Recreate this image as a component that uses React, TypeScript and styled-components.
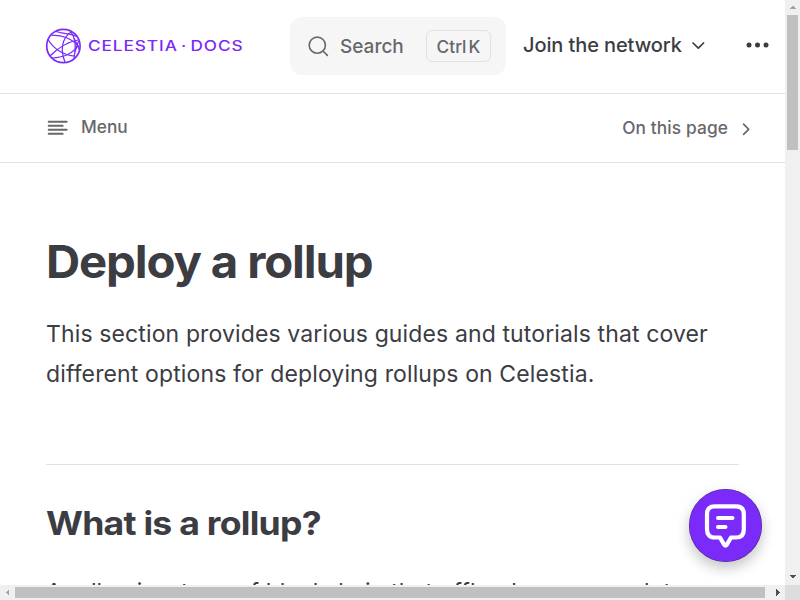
import React from 'react';
import styled, { createGlobalStyle } from 'styled-components';

const GlobalStyle = createGlobalStyle`
  * { box-sizing: border-box; }
  body { margin: 0; overflow: hidden; background: #fff; color: #3c3c43;
    font-family: Inter, "Liberation Sans", sans-serif; }
  button { font: inherit; color: inherit; border: 0; background: none; padding: 0; }
  svg { display: block; flex-shrink: 0; }
`;

const Frame = styled.div`
  display: grid;
  grid-template: 585px 15px / 785px 15px;
  width: 800px;
  height: 600px;
  position: relative;
  overflow: hidden;
`;
const Page = styled.div`
  overflow: hidden;
`;
const NavBar = styled.header`
  display: flex;
  align-items: center;
  height: 94px;
  padding-left: 45px;
  padding-bottom: 2px;
  border-bottom: 1px solid #e2e2e3;
`;
const Logo = styled.a`
  display: flex;
  align-items: center;
  width: 245px;
  gap: 6px;
  color: #7b2bf9;
`;
const Stretch = styled.span<{ $x: number }>`
  display: inline-block;
  white-space: nowrap;
  transform: scaleX(${p => p.$x});
  transform-origin: left center;
`;
const LogoText = styled.span`
  font-size: 14px;
  line-height: 20px;
  font-weight: 500;
  letter-spacing: 0.75px;
  word-spacing: -1.8px;
  padding-top: 1px;
`;
const SearchButton = styled.button`
  display: flex;
  align-items: center;
  width: 216px;
  height: 58px;
  padding: 0 15px 0 17px;
  border-radius: 12px;
  background: #f6f6f7;
  color: #67676c;
  font-size: 19px;
  font-weight: 500;
`;
const SearchLabel = styled.span`
  margin-left: 10px;
  padding-top: 1px;
`;
const Keys = styled.span`
  display: flex;
  align-items: center;
  justify-content: center;
  gap: 2px;
  width: 65px;
  height: 32px;
  margin-left: auto;
  padding-top: 1px;
  border: 1px solid #e2e2e3;
  border-radius: 6px;
  font-size: 17.3px;
`;
const NavMenu = styled.button`
  display: flex;
  align-items: center;
  gap: 8px;
  margin-left: 17px;
  padding-bottom: 1px;
  font-size: 20px;
  font-weight: 500;
  letter-spacing: -0.1px;
  white-space: nowrap;
`;
const MoreButton = styled.button`
  margin-left: 38px;
  padding-bottom: 1px;
`;
const LocalNav = styled.nav`
  display: flex;
  align-items: center;
  justify-content: space-between;
  height: 69px;
  padding: 0 32px 3px 46px;
  border-bottom: 1px solid #e2e2e3;
  color: #67676c;
  font-size: 17.3px;
  font-weight: 500;
`;
const LocalButton = styled.button<{ $gap: number; $drop?: number; $spacing?: number }>`
  display: flex;
  align-items: center;
  gap: ${p => p.$gap}px;
  padding-top: ${p => p.$drop ?? 0}px;
  letter-spacing: ${p => p.$spacing ?? 0}px;
`;
const Article = styled.main`
  padding: 70px 46px 0;
`;
const Title = styled.h1`
  margin: 0;
  font-size: 45px;
  line-height: 58px;
  font-weight: 700;
  letter-spacing: -1.1px;
`;
const Paragraph = styled.p<{ $top?: number }>`
  margin: ${p => p.$top ?? 23}px 0 0;
  font-size: 23px;
  line-height: 40px;
  font-weight: 400;
  letter-spacing: 0.125px;
  white-space: nowrap;
`;
const Section = styled.section`
  margin-top: 70px;
  padding-top: 35px;
  border-top: 1px solid #e2e2e3;
`;
const Heading = styled.h2`
  margin: 0;
  font-size: 33px;
  line-height: 46px;
  font-weight: 700;
  letter-spacing: -0.7px;
`;
const ScrollTrack = styled.div<{ $vertical?: boolean }>`
  display: flex;
  flex-direction: ${p => (p.$vertical ? 'column' : 'row')};
  justify-content: space-between;
  background: #f0f0f0;
`;
const Thumb = styled.div<{ $vertical?: boolean }>`
  flex: none;
  width: ${p => (p.$vertical ? '11px' : '750px')};
  height: ${p => (p.$vertical ? '135px' : '11px')};
  margin: ${p => (p.$vertical ? '0 2px auto' : '2px auto 2px 0')};
  background: #c0c0c0;
`;
const Corner = styled.div`
  background: #dcdcdc;
`;
const ChatButton = styled.button`
  position: absolute;
  left: 689px;
  top: 489px;
  display: grid;
  place-items: center;
  width: 73px;
  height: 73px;
  border-radius: 50%;
  background: #7b2bf9;
  box-shadow: 0 6px 14px rgba(0, 0, 0, 0.24), inset 0 0 0 0.5px rgba(30, 30, 30, 0.6);
`;

const Arrow = ({ d, fill = '#505050' }: { d: string; fill?: string }) => (
  <svg width="15" height="15"><path d={d} fill={fill} shapeRendering="crispEdges" /></svg>
);

const Globe = () => (
  <svg width="37" height="36" viewBox="0 0 37 36" fill="none" stroke="currentColor" strokeWidth="1.25">
    <circle cx="18.4" cy="18" r="16.7" strokeWidth="1.7" />
    <path d="M6.5 7.5C15 6.5 27 10 34 19" />
    <path d="M11 3.5C18 6 27 5.5 31.5 8.5" />
    <path d="M26 4C17 10 15 22 20 34" />
    <path d="M25.5 3C30 9 32 17 29 30" />
    <path d="M3 11.5C8 20 18 27.5 30 28" />
    <path d="M5 28C13 20 22 14 33 12" />
    <path d="M7 30C17 29.5 28 26 33 17" />
    <path d="M29 10L34.5 22M33.5 13L30 24" />
  </svg>
);

export default function App() {
  return (
    <>
      <GlobalStyle />
      <Frame>
        <Page>
          <NavBar>
            <Logo>
              <Globe />
              <LogoText><Stretch $x={1.23}>CELESTIA · DOCS</Stretch></LogoText>
            </Logo>
            <SearchButton>
              <svg width="23" height="23" viewBox="0 0 23 23" fill="none" stroke="currentColor" strokeWidth="1.6" strokeLinecap="round">
                <circle cx="10.3" cy="11.2" r="8.1" /><path d="m16.2 17.2 4.2 4.2" />
              </svg>
              <SearchLabel>Search</SearchLabel>
              <Keys><span>Ctrl</span><span>K</span></Keys>
            </SearchButton>
            <NavMenu>
              Join the network
              <svg width="16" height="16" viewBox="0 0 16 16" fill="none" stroke="currentColor" strokeWidth="1.7" strokeLinecap="round" strokeLinejoin="round"><path d="m3 6 5.3 5.2L13.6 6" /></svg>
            </NavMenu>
            <MoreButton>
              <svg width="28" height="8" fill="currentColor"><circle cx="5" cy="4" r="2.5" /><circle cx="13.5" cy="4" r="2.5" /><circle cx="22" cy="4" r="2.5" /></svg>
            </MoreButton>
          </NavBar>
          <LocalNav>
            <LocalButton $gap={12}>
              <svg width="23" height="20" viewBox="0 0 23 20" stroke="currentColor" strokeWidth="1.9" strokeLinecap="round"><path d="M2.7 4.7h18M2.7 8.7h14M2.7 12.7h18M2.7 16.7h14" /></svg>
              Menu
            </LocalButton>
            <LocalButton $gap={11} $drop={2} $spacing={0.12}>
              On this page
              <svg width="14" height="16" viewBox="0 0 14 16" fill="none" stroke="currentColor" strokeWidth="1.7" strokeLinecap="round" strokeLinejoin="round"><path d="m4.6 4.2 5.1 5.1-5.1 5.1" /></svg>
            </LocalButton>
          </LocalNav>
          <Article>
            <Title><Stretch $x={1.052}>Deploy a rollup</Stretch></Title>
            <Paragraph>
              This section provides various guides and tutorials that cover<br />
              different options for deploying rollups on Celestia.
            </Paragraph>
            <Section>
              <Heading><Stretch $x={1.079}>What is a rollup?</Stretch></Heading>
              <Paragraph $top={26}>A rollup is a type of blockchain that offloads some work to a</Paragraph>
            </Section>
          </Article>
        </Page>
        <ScrollTrack $vertical>
          <Arrow d="M4 9h7L7.5 5.5Z" fill="#a3a3a3" />
          <Thumb $vertical />
          <Arrow d="M4 5h7L7.5 8.5Z" />
        </ScrollTrack>
        <ScrollTrack>
          <Arrow d="M9 4v7L5.5 7.5Z" fill="#a3a3a3" />
          <Thumb />
          <Arrow d="M6 4v7l3.5-3.5Z" />
        </ScrollTrack>
        <Corner />
        <ChatButton>
          <svg width="46" height="46" viewBox="0 0 46 46" fill="none" stroke="#fff" strokeLinecap="round" strokeLinejoin="round">
            <path strokeWidth="4.2" d="M12 3.4H33Q40.8 3.4 40.8 11V26.4Q40.8 34.5 33 34.5H28L23.8 41.8Q22.5 43.4 21.2 41.8L17 34.5H12Q4 34.5 4 26.4V11Q4 3.4 12 3.4Z" />
            <path strokeWidth="4" d="M15 15H29.5M15 24H22.5" />
          </svg>
        </ChatButton>
      </Frame>
    </>
  );
}
